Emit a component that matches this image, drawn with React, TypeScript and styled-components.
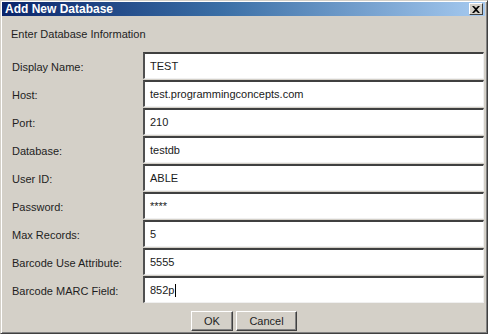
import React from 'react';
import styled, { createGlobalStyle } from 'styled-components';

const GlobalStyle = createGlobalStyle`
  html, body {
    margin: 0;
    padding: 0;
    background: #d4d0c8;
    overflow: hidden;
  }
`;

const Window = styled.div`
  box-sizing: border-box;
  width: 488px;
  height: 334px;
  display: flex;
  flex-direction: column;
  background: #d4d0c8;
  border: 1px solid;
  border-color: #d4d0c8 #404040 #404040 #d4d0c8;
  box-shadow: inset 1px 1px #ffffff, inset -1px -1px #808080;
  padding: 1px 2px 2px 1px;
  font-family: 'Liberation Sans', Arial, sans-serif;
  color: #1e1e1e;
`;

const TitleBar = styled.div`
  height: 14px;
  display: flex;
  align-items: center;
  justify-content: space-between;
  padding: 0 2px 0 3px;
  background: linear-gradient(to right, #0a246a 0%, #3a6ea5 45%, #a6caf0 100%);
`;

const Title = styled.span`
  color: #ffffff;
  font-family: 'Liberation Sans', Arial, sans-serif;
  font-weight: bold;
  font-size: 12px;
`;

const CloseButton = styled.div`
  box-sizing: border-box;
  width: 14px;
  height: 12px;
  display: flex;
  align-items: center;
  justify-content: center;
  background: #d4d0c8;
  border: 1px solid;
  border-color: #ffffff #404040 #404040 #ffffff;
`;

const Heading = styled.div`
  height: 37px;
  display: flex;
  align-items: center;
  padding-left: 9px;
  font-size: 11px;
`;

const Form = styled.div`
  display: grid;
  grid-template-columns: 141px 1fr;
  grid-auto-rows: 28px;
  padding-right: 1px;
`;

const Label = styled.label`
  display: flex;
  align-items: center;
  padding-left: 10px;
  font-size: 11px;
  padding-top: 1px;
`;

const Field = styled.div<{ $caret?: boolean }>`
  box-sizing: border-box;
  height: 27px;
  display: flex;
  align-items: center;
  padding-left: 5px;
  background: #ffffff;
  border-style: solid;
  border-width: 2px 1px 1px 2px;
  border-color: #404040 #f0f0f0 #f0f0f0 #505050;
  font-size: 11px;
  color: #1a1a1a;
  &::after {
    content: '';
    display: ${(p) => (p.$caret ? 'block' : 'none')};
    width: 1px;
    height: 13px;
    background: #000;
    margin-left: 1px;
  }
`;

const Footer = styled.div`
  flex: 1;
  display: flex;
  justify-content: center;
  align-items: flex-start;
  gap: 3px;
  padding-top: 7px;
  padding-left: 1px;
`;

const Button = styled.div<{ $w: number }>`
  box-sizing: border-box;
  width: ${(p) => p.$w}px;
  height: 20px;
  display: flex;
  align-items: center;
  justify-content: center;
  font-size: 11px;
  background: #d4d0c8;
  border: 1px solid;
  border-color: #ffffff #404040 #404040 #ffffff;
  box-shadow: inset -1px -1px #808080;
`;

const fields: [string, string, boolean?][] = [
  ['Display Name:', 'TEST'],
  ['Host:', 'test.programmingconcepts.com'],
  ['Port:', '210'],
  ['Database:', 'testdb'],
  ['User ID:', 'ABLE'],
  ['Password:', '****'],
  ['Max Records:', '5'],
  ['Barcode Use Attribute:', '5555'],
  ['Barcode MARC Field:', '852p', true],
];

const App: React.FC = () => {
  return (
    <>
      <GlobalStyle />
      <Window>
        <TitleBar>
          <Title>Add New Database</Title>
          <CloseButton>
            <svg width="8" height="7" viewBox="0 0 8 7">
              <path d="M0 0h2l2 2 2-2h2L5 3.5 8 7H6L4 5 2 7H0l3-3.5z" fill="#000" />
            </svg>
          </CloseButton>
        </TitleBar>
        <Heading>Enter Database Information</Heading>
        <Form>
          {fields.map(([label, value, caret]) => (
            <React.Fragment key={label}>
              <Label>{label}</Label>
              <Field $caret={caret}>{value}</Field>
            </React.Fragment>
          ))}
        </Form>
        <Footer>
          <Button $w={42}>OK</Button>
          <Button $w={61}>Cancel</Button>
        </Footer>
      </Window>
    </>
  );
};

export default App;
